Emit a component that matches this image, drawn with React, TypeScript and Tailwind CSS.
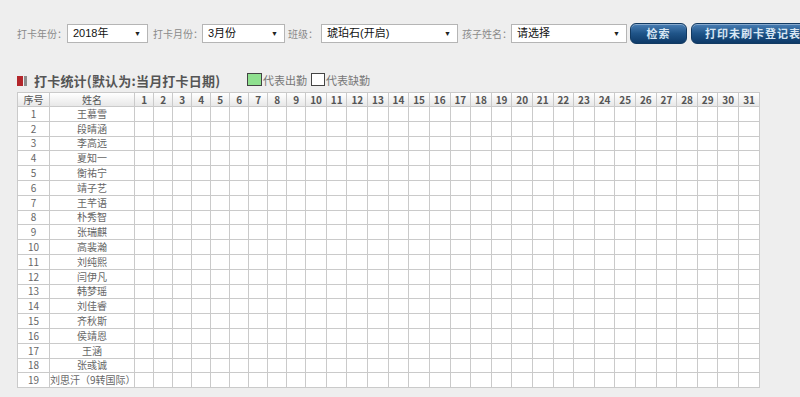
import React from "react";

const names = [
  "王慕雪",
  "段晴涵",
  "李高远",
  "夏知一",
  "衡祐宁",
  "靖子艺",
  "王芊语",
  "朴秀智",
  "张瑞麒",
  "高裴瀚",
  "刘纯熙",
  "闫伊凡",
  "韩梦瑶",
  "刘佳睿",
  "齐秋斯",
  "侯靖恩",
  "王涵",
  "张彧诚",
  "刘思汗（9转国际）",
];

const days = Array.from({ length: 31 }, (_, i) => i + 1);

function FakeSelect({ text, width }: { text: string; width: string }) {
  return (
    <div
      className={`${width} h-[19px] shrink-0 bg-white border border-[#b5b5b5] flex items-center justify-between pl-[5px] pr-[6px] text-[11px] text-[#111] font-['Liberation_Sans','Noto_Sans_CJK_SC',sans-serif]`}
    >
      <span className="leading-none">{text}</span>
      <span className="text-[7px] leading-none text-[#222]">▼</span>
    </div>
  );
}

function Label({ text, width }: { text: string; width: string }) {
  return (
    <span
      className={`${width} shrink-0 text-[10px] leading-none text-[#8a8a8a] font-['Noto_Sans_CJK_SC',sans-serif]`}
    >
      {text}
    </span>
  );
}

function Btn({ text, width }: { text: string; width: string }) {
  return (
    <div
      className={`${width} h-[21px] shrink-0 rounded-[6px] border border-[#123a62] bg-gradient-to-b from-[#4a7fb5] via-[#1f5488] to-[#0e3a68] flex items-center justify-center text-[11px] font-bold text-[#d8e6f3] tracking-[1px] font-['Noto_Sans_CJK_SC',sans-serif] shadow-[inset_0_1px_0_rgba(255,255,255,0.35)]`}
    >
      {text}
    </div>
  );
}

export default function App() {
  return (
    <div className="w-[800px] h-[397px] bg-[#eeeeee] overflow-hidden font-['Noto_Sans_CJK_SC',sans-serif]">
      {/* filter bar */}
      <div className="flex items-center h-[21px] mt-[23px] ml-[17px] whitespace-nowrap">
        <Label text="打卡年份：" width="w-[50px]" />
        <FakeSelect text="2018年" width="w-[81px]" />
        <span className="w-[5px] shrink-0" />
        <Label text="打卡月份：" width="w-[49px]" />
        <FakeSelect text="3月份" width="w-[83px]" />
        <span className="w-[3px] shrink-0" />
        <Label text="班级：" width="w-[33px]" />
        <FakeSelect text="琥珀石(开启)" width="w-[137px]" />
        <span className="w-[4px] shrink-0" />
        <Label text="孩子姓名：" width="w-[49px]" />
        <FakeSelect text="请选择" width="w-[116px]" />
        <span className="w-[3px] shrink-0" />
        <Btn text="检索" width="w-[57px]" />
        <span className="w-[4px] shrink-0" />
        <Btn text="打印未刷卡登记表" width="w-[124px]" />
      </div>

      {/* title row */}
      <div className="flex items-center h-[21px] mt-[26px] ml-[17px] whitespace-nowrap">
        <span className="w-[6px] h-[10px] bg-[#b3262b] shrink-0" />
        <span className="w-[3px] h-[10px] bg-[#8c8c8c] ml-[1px] shrink-0" />
        <span className="w-[213px] ml-[7px] shrink-0 text-[13px] font-bold text-[#555] leading-none tracking-[0.2px]">
          打卡统计(默认为:当月打卡日期)
        </span>
        <div className="flex items-end h-[15px] mt-[-4px]">
          <span className="w-[15px] h-[13px] bg-[#8fe08f] border border-[#444] shrink-0" />
          <span className="text-[11px] leading-none text-[#777] ml-[1px]">代表出勤</span>
          <span className="w-[14px] h-[13px] bg-white border border-[#444] ml-[4px] shrink-0" />
          <span className="text-[11px] leading-none text-[#777] ml-[1px]">代表缺勤</span>
        </div>
      </div>

      {/* table */}
      <table className="ml-[17px] mt-[1px] w-[743px] table-fixed border-collapse bg-white">
        <colgroup>
          <col style={{ width: 32 }} />
          <col style={{ width: 85 }} />
          {days.map((d) => (
            <col key={d} style={{ width: d < 10 ? 19 : 20.6 }} />
          ))}
        </colgroup>
        <thead>
          <tr className="h-[14px] bg-gradient-to-b from-white to-[#e6e6e6]">
            <th className="p-0 border border-[#cacaca] text-[10px] font-normal text-[#555] leading-none">
              序号
            </th>
            <th className="p-0 border border-[#cacaca] text-[10px] font-normal text-[#555] leading-none">
              姓名
            </th>
            {days.map((d) => (
              <th
                key={d}
                className="p-0 border border-[#cacaca] text-[10px] font-bold text-[#555] leading-none"
              >
                {d}
              </th>
            ))}
          </tr>
        </thead>
        <tbody>
          {names.map((n, i) => (
            <tr key={i} className="h-[14.8px]">
              <td className="p-0 border border-[#cacaca] text-center text-[10px] text-[#666] leading-none">
                {i + 1}
              </td>
              <td className="p-0 border border-[#cacaca] text-center text-[10px] text-[#666] leading-none whitespace-nowrap overflow-visible">
                {n}
              </td>
              {days.map((d) => (
                <td key={d} className="p-0 border border-[#cacaca]" />
              ))}
            </tr>
          ))}
        </tbody>
      </table>
    </div>
  );
}
